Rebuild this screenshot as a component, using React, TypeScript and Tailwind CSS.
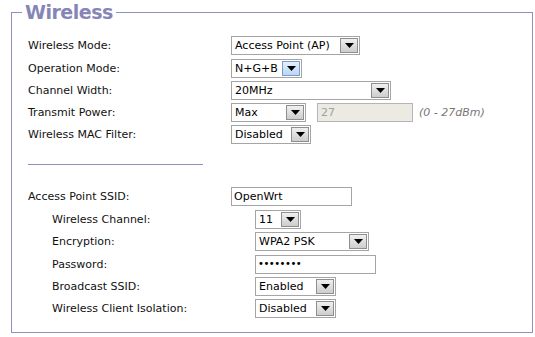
import React from "react";

const font = { fontFamily: '"DejaVu Sans", Verdana, sans-serif' };

function Arrow({ hot }: { hot?: boolean }) {
  return (
    <div
      className={
        "flex h-[15px] w-[18px] shrink-0 items-center justify-center border " +
        (hot
          ? "border-[#7a9cc6] bg-gradient-to-b from-[#e4f0fc] to-[#b9d6f4]"
          : "border-[#8e8e8e] bg-gradient-to-b from-[#f0f0f0] to-[#cdcdcd]")
      }
    >
      <svg width="9" height="5" viewBox="0 0 9 5">
        <path d="M0 0h9L4.5 5z" fill="#000" />
      </svg>
    </div>
  );
}

function Select({ value, w, hot }: { value: string; w: string; hot?: boolean }) {
  return (
    <div
      className={
        "flex h-[19px] items-center justify-between border border-[#a5a5a5] bg-white pl-[3px] pr-[1px] text-[11px] leading-none text-black " +
        w
      }
    >
      <span className="whitespace-nowrap">{value}</span>
      <Arrow hot={hot} />
    </div>
  );
}

function Row({
  label,
  children,
  indent,
  h,
}: {
  label: string;
  children: React.ReactNode;
  indent?: boolean;
  h: string;
}) {
  return (
    <div className={"flex items-center " + h}>
      <div
        className={
          "w-[203px] shrink-0 whitespace-nowrap text-[11px] leading-none text-[#111] " +
          (indent ? "pl-[24px]" : "")
        }
      >
        {label}
      </div>
      <div className={"flex items-center " + (indent ? "pl-[24px]" : "")}>{children}</div>
    </div>
  );
}

export default function App() {
  return (
    <div className="h-[337px] w-[535px] bg-white" style={font}>
      <fieldset className="ml-[11px] w-[522px] border border-[#8f8fc3] pb-[13px] pl-[16px] pt-[10px]">
        <legend className="-ml-[6px] px-[3px] text-[19px] font-bold leading-[24px] tracking-[-0.5px] text-[#8585b8]">
          Wireless
        </legend>
        <Row label="Wireless Mode:" h="h-[22px] mb-px">
          <Select value="Access Point (AP)" w="w-[129px]" />
        </Row>
        <Row label="Operation Mode:" h="h-[22px]">
          <Select value="N+G+B" w="w-[71px]" hot />
        </Row>
        <Row label="Channel Width:" h="h-[22px]">
          <Select value="20MHz" w="w-[160px]" />
        </Row>
        <Row label="Transmit Power:" h="h-[22px]">
          <Select value="Max" w="w-[75px]" />
          <div className="ml-[11px] flex h-[19px] w-[96px] items-center border border-[#b5b5b5] bg-[#ebebe4] pl-[3px] text-[11px] leading-none text-[#a0a0a0]">
            27
          </div>
          <span className="ml-[6px] whitespace-nowrap text-[11px] italic leading-none text-[#777]">
            (0 - 27dBm)
          </span>
        </Row>
        <Row label="Wireless MAC Filter:" h="h-[22px]">
          <Select value="Disabled" w="w-[80px]" />
        </Row>
        <div className="mt-[19px] h-px w-[175px] bg-[#8f8fc3]" />
        <div className="mt-[20px]">
          <Row label="Access Point SSID:" h="h-[23px]">
            <div className="flex h-[19px] w-[121px] items-center border border-[#a5a5a5] bg-white pl-[2px] text-[11px] leading-none text-black">
              OpenWrt
            </div>
          </Row>
          <Row label="Wireless Channel:" indent h="h-[22px]">
            <Select value="11" w="w-[46px]" />
          </Row>
          <Row label="Encryption:" indent h="h-[23px]">
            <Select value="WPA2 PSK" w="w-[114px]" />
          </Row>
          <Row label="Password:" indent h="h-[22px]">
            <div className="flex h-[19px] w-[121px] items-center border border-[#a5a5a5] bg-white pl-[2px] text-[10px] leading-none tracking-[-0.5px] text-black">
              ••••••••
            </div>
          </Row>
          <Row label="Broadcast SSID:" indent h="h-[22px]">
            <Select value="Enabled" w="w-[81px]" />
          </Row>
          <Row label="Wireless Client Isolation:" indent h="h-[22px]">
            <Select value="Disabled" w="w-[81px]" />
          </Row>
        </div>
      </fieldset>
    </div>
  );
}
